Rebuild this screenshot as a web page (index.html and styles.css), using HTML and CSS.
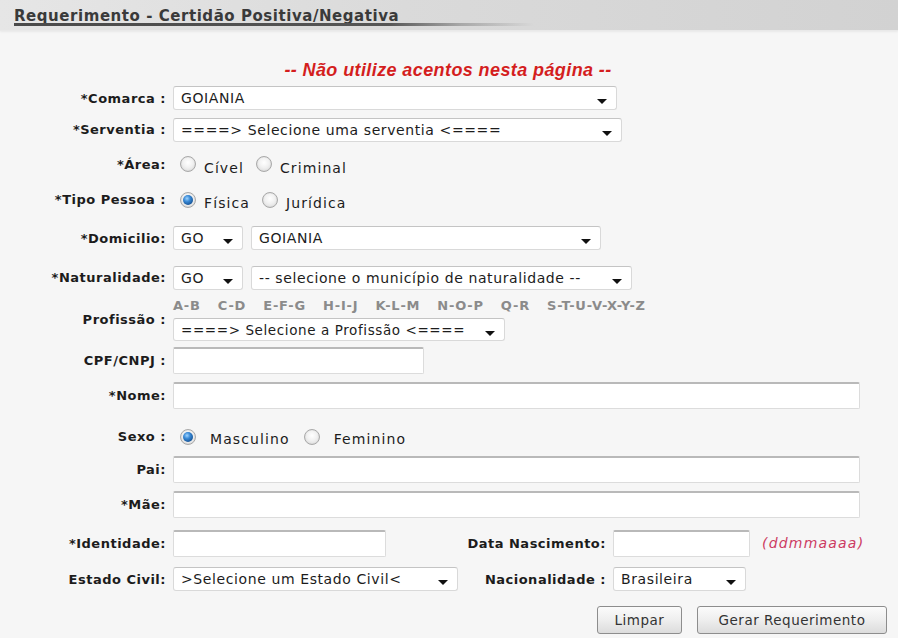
FILE: index.html
```html
<!DOCTYPE html>
<html lang="pt">
<head>
<meta charset="utf-8">
<title>Requerimento - Certidão Positiva/Negativa</title>
<link rel="stylesheet" href="styles.css">
</head>
<body>
<div class="page">
  <div class="header">
    <h1 class="title">Requerimento - Certidão Positiva/Negativa</h1>
  </div>
  <div class="content">
    <p class="warning">-- Não utilize acentos nesta página --</p>

    <div class="row h-comarca">
      <span class="label">*Comarca :</span>
      <div class="ctrls"><div class="select w-comarca"><span>GOIANIA</span><i class="arrow"></i></div></div>
    </div>

    <div class="row h-serventia">
      <span class="label">*Serventia :</span>
      <div class="ctrls"><div class="select w-serventia"><span>====&gt; Selecione uma serventia &lt;====</span><i class="arrow"></i></div></div>
    </div>

    <div class="row h-area">
      <span class="label">*Área:</span>
      <div class="ctrls radios">
        <span class="radio"></span><span class="opt">Cível</span>
        <span class="radio"></span><span class="opt">Criminal</span>
      </div>
    </div>

    <div class="row h-tipo">
      <span class="label">*Tipo Pessoa :</span>
      <div class="ctrls radios">
        <span class="radio checked"></span><span class="opt">Física</span>
        <span class="radio"></span><span class="opt">Jurídica</span>
      </div>
    </div>

    <div class="row h-domicilio">
      <span class="label">*Domicilio:</span>
      <div class="ctrls pair">
        <div class="select w-uf"><span>GO</span><i class="arrow"></i></div>
        <div class="select w-domicilio"><span>GOIANIA</span><i class="arrow"></i></div>
      </div>
    </div>

    <div class="row h-natural">
      <span class="label">*Naturalidade:</span>
      <div class="ctrls pair">
        <div class="select w-uf"><span>GO</span><i class="arrow"></i></div>
        <div class="select w-natural"><span>-- selecione o município de naturalidade --</span><i class="arrow"></i></div>
      </div>
    </div>

    <div class="row h-profissao">
      <span class="label">Profissão :</span>
      <div class="ctrls stack">
        <div class="letters">
          <span>A-B</span><span>C-D</span><span>E-F-G</span><span>H-I-J</span><span>K-L-M</span><span>N-O-P</span><span>Q-R</span><span>S-T-U-V-X-Y-Z</span>
        </div>
        <div class="select small w-profissao"><span>====&gt; Selecione a Profissão &lt;====</span><i class="arrow"></i></div>
      </div>
    </div>

    <div class="row h-text">
      <span class="label">CPF/CNPJ :</span>
      <div class="ctrls"><div class="input w-cpf"></div></div>
    </div>

    <div class="row h-text">
      <span class="label">*Nome:</span>
      <div class="ctrls"><div class="input w-full"></div></div>
    </div>

    <div class="row h-sexo">
      <span class="label">Sexo :</span>
      <div class="ctrls radios wide">
        <span class="radio checked"></span><span class="opt">Masculino</span>
        <span class="radio"></span><span class="opt">Feminino</span>
      </div>
    </div>

    <div class="row h-text">
      <span class="label">Pai:</span>
      <div class="ctrls"><div class="input w-full"></div></div>
    </div>

    <div class="row h-text">
      <span class="label">*Mãe:</span>
      <div class="ctrls"><div class="input w-full"></div></div>
    </div>

    <div class="row h-ident">
      <span class="label">*Identidade:</span>
      <div class="ctrls">
        <div class="input w-ident"></div>
        <span class="label2 w-l2a">Data Nascimento:</span>
        <div class="input w-data"></div>
        <span class="hint">(ddmmaaaa)</span>
      </div>
    </div>

    <div class="row h-civil">
      <span class="label">Estado Civil:</span>
      <div class="ctrls">
        <div class="select w-civil"><span>&gt;Selecione um Estado Civil&lt;</span><i class="arrow"></i></div>
        <span class="label2 w-l2b">Nacionalidade :</span>
        <div class="select w-nac"><span>Brasileira</span><i class="arrow"></i></div>
      </div>
    </div>

    <div class="buttons">
      <button class="btn w-limpar" type="button">Limpar</button>
      <button class="btn w-gerar" type="button">Gerar Requerimento</button>
    </div>
  </div>
</div>
</body>
</html>
```

FILE: styles.css
```css
html, body {
  margin: 0;
  padding: 0;
  background: #ffffff;
}

.page {
  width: 898px;
  height: 638px;
  background: #f6f6f6;
  font-family: "DejaVu Sans", Verdana, sans-serif;
  color: #1e1e1e;
  overflow: hidden;
}

/* ---------- header ---------- */
.header {
  height: 30px;
  background: linear-gradient(to right, #e6e6e6 0%, #dadada 45%, #d2d2d2 100%);
  border-bottom: 1px solid #e9e9e9;
  box-shadow: 0 1px 2px rgba(0,0,0,0.06);
}

.title {
  margin: 0;
  padding: 8px 0 0 14px;
  font-size: 15px;
  font-weight: bold;
  letter-spacing: 0.55px;
  color: #3a3a3a;
  line-height: 16px;
  position: relative;
  height: 26px;
  box-sizing: border-box;
}

.title::after {
  content: "";
  position: absolute;
  left: 14px;
  top: 23px;
  width: 520px;
  height: 3px;
  background: linear-gradient(to right, #4a4a4a 0%, #555 72%, rgba(120,120,120,0.5) 86%, rgba(200,200,200,0) 100%);
}

/* ---------- content ---------- */
.content {
  padding-top: 27px;
}

.warning {
  margin: 0;
  height: 25px;
  line-height: 25px;
  text-align: center;
  font-family: "Liberation Sans", Arial, sans-serif;
  font-weight: bold;
  font-style: italic;
  font-size: 18px;
  letter-spacing: 0.4px;
  color: #d41e1e;
  padding-right: 2px;
}

.row {
  display: flex;
  align-items: center;
}

.label {
  width: 166px;
  flex: none;
  text-align: right;
  font-weight: bold;
  font-size: 13px;
  letter-spacing: 0.5px;
  color: #1c1c1c;
  white-space: nowrap;
}

.ctrls {
  margin-left: 7px;
  display: flex;
  align-items: center;
}

/* row heights */
.h-comarca { height: 30px; }
.h-serventia { height: 33px; }
.h-area { height: 36px; }
.h-tipo { height: 35px; }
.h-domicilio { height: 42px; }
.h-natural { height: 37px; }
.h-profissao { height: 47px; }
.h-text { height: 35px; }
.h-sexo { height: 39px; padding-top: 8px; box-sizing: border-box; }
.h-ident { height: 42px; }
.h-civil { height: 30px; }

/* ---------- select ---------- */
.select {
  box-sizing: border-box;
  height: 24px;
  background: #fff;
  border: 1px solid #d9d9d9;
  border-top-color: #c4c4c4;
  border-radius: 3px;
  display: flex;
  align-items: center;
  padding-left: 7px;
  font-size: 14px;
  letter-spacing: 0.6px;
  color: #1c1c1c;
  white-space: nowrap;
  overflow: hidden;
}

.select.small {
  height: 23px;
  font-size: 13.5px;
}

.arrow {
  flex: none;
  margin-left: auto;
  margin-right: 9px;
  margin-top: 7px;
  width: 0;
  height: 0;
  border-left: 5px solid transparent;
  border-right: 5px solid transparent;
  border-top: 5px solid #111;
}

.w-comarca { width: 444px; }
.w-serventia { width: 449px; }
.w-uf { width: 70px; }
.w-domicilio { width: 350px; }
.w-natural { width: 381px; }
.w-profissao { width: 332px; }
.w-civil { width: 285px; }
.w-nac { width: 133px; }

.pair .select + .select { margin-left: 8px; }

/* ---------- radios ---------- */
.radios { padding-left: 7px; }

.radio {
  flex: none;
  box-sizing: border-box;
  width: 16px;
  height: 16px;
  border-radius: 50%;
  border: 1px solid #a9a9a9;
  background: radial-gradient(circle at 50% 40%, #ffffff 0%, #f1f1f1 45%, #d6d6d6 100%);
  box-shadow: inset 0 0 1px rgba(0,0,0,0.15);
  display: flex;
  align-items: center;
  justify-content: center;
}

.radio.checked::after {
  content: "";
  width: 10px;
  height: 10px;
  border-radius: 50%;
  background: radial-gradient(circle at 40% 35%, #9fd4ff 0%, #3a8ad6 35%, #1a5a9e 70%, #0e3b6e 100%);
}

.opt {
  font-size: 14px;
  letter-spacing: 1.1px;
  margin-left: 8px;
  margin-right: 12px;
  margin-top: 7px;
  color: #1c1c1c;
}

.wide .opt {
  margin-left: 14px;
  margin-right: 14px;
  margin-top: 5px;
}

/* ---------- profissão ---------- */
.stack {
  flex-direction: column;
  align-items: flex-start;
}

.letters {
  display: flex;
  gap: 17px;
  font-weight: bold;
  font-size: 13px;
  color: #8b8b8b;
  line-height: 15px;
  margin-bottom: 5px;
  letter-spacing: 0.8px;
}

/* ---------- inputs ---------- */
.input {
  box-sizing: border-box;
  height: 27px;
  background: #fff;
  border: 1px solid #dcdcdc;
  border-top: 2px solid #b9b9b9;
  border-radius: 2px;
}

.w-cpf { width: 251px; }
.w-full { width: 687px; }
.w-ident { width: 213px; }
.w-data { width: 137px; }

.label2 {
  flex: none;
  text-align: right;
  font-weight: bold;
  font-size: 13px;
  letter-spacing: 0.5px;
  color: #1c1c1c;
  margin-right: 7px;
  white-space: nowrap;
}

.w-l2a { width: 220px; }
.w-l2b { width: 148px; }

.hint {
  margin-left: 12px;
  font-style: italic;
  font-size: 14px;
  letter-spacing: 1.2px;
  color: #cc3b62;
}

/* ---------- buttons ---------- */
.buttons {
  display: flex;
  justify-content: flex-end;
  gap: 15px;
  padding-right: 11px;
  padding-top: 12px;
}

.btn {
  box-sizing: border-box;
  height: 28px;
  border: 1px solid #8d8d8d;
  border-radius: 3px;
  background: linear-gradient(to bottom, #fbfbfb 0%, #eeeeee 50%, #dcdcdc 100%);
  font-family: "DejaVu Sans", Verdana, sans-serif;
  font-size: 13.5px;
  letter-spacing: 0.5px;
  color: #333;
  padding: 0;
}

.w-limpar { width: 85px; }
.w-gerar { width: 190px; }
```
